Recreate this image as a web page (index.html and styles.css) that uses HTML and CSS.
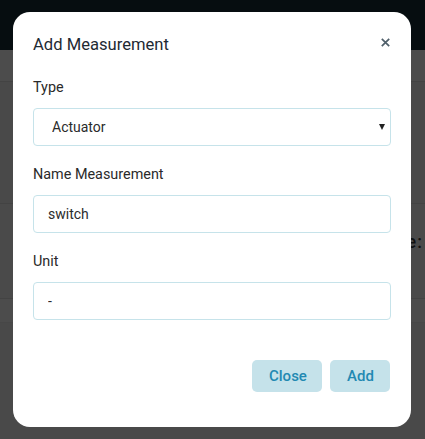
FILE: index.html
```html
<!DOCTYPE html>
<html>
<head>
<meta charset="utf-8">
<link rel="stylesheet" href="styles.css">
</head>
<body>
<div class="page">
  <div class="topbar"></div>
  <div class="row row-a"></div>
  <div class="row row-b"></div>
  <div class="row row-c"><span class="ghost">Type:</span></div>
  <div class="row row-d"></div>
  <div class="row row-e"></div>
</div>
<div class="modal">
  <div class="modal-header">
    <h5 class="modal-title">Add Measurement</h5>
    <button class="close-x" type="button" aria-label="Close">
      <svg width="9" height="9" viewBox="0 0 9 9"><path d="M0.8 0.8 L8.2 8.2 M8.2 0.8 L0.8 8.2" stroke="#4f5f6a" stroke-width="1.7" stroke-linecap="butt"/></svg>
    </button>
  </div>
  <div class="modal-body">
    <div class="group">
      <label class="label">Type</label>
      <div class="select-wrap">
        <select class="control select"><option>Actuator</option></select>
        <span class="caret"></span>
      </div>
    </div>
    <div class="group">
      <label class="label">Name Measurement</label>
      <input class="control input" value="switch">
    </div>
    <div class="group">
      <label class="label">Unit</label>
      <input class="control input" value="-">
    </div>
  </div>
  <div class="modal-footer">
    <button class="btn btn-close" type="button">Close</button>
    <button class="btn btn-add" type="button">Add</button>
  </div>
</div>
</body>
</html>
```
FILE: styles.css
```css
* { box-sizing: border-box; }
html, body { margin: 0; padding: 0; }
body {
  width: 425px;
  height: 439px;
  overflow: hidden;
  background: #4a4a4a;
  font-family: Roboto, "Liberation Sans", sans-serif;
  position: relative;
}
.page { display: flex; flex-direction: column; height: 439px; }
.topbar { height: 50px; background: #060d10; }
.row { border-bottom: 1px solid #434343; }
.row-a { height: 32px; background: #4c4c4c; }
.row-b { height: 122px; background: #494949; }
.row-c { height: 95px; background: #4a4a4a; display: flex; justify-content: flex-end; align-items: flex-start; padding-top: 27px; }
.row-d { height: 24px; background: #4c4c4c; border-bottom-color: #474747; }
.row-e { flex: 1; background: #494949; border-bottom: none; }
.ghost { color: #111; font-size: 18px; font-weight: 500; font-family: Roboto, "Liberation Sans", sans-serif; padding-right: 2px; letter-spacing: 1px; }

.modal {
  position: absolute;
  left: 13px;
  top: 12px;
  width: 398px;
  height: 415px;
  background: #fff;
  border-radius: 17px;
  display: flex;
  flex-direction: column;
}
.modal-header {
  display: flex;
  align-items: center;
  justify-content: space-between;
  padding: 20px 21px 0 20px;
}
.modal-title {
  margin: 0;
  font-size: 16.6px;
  font-weight: 400;
  line-height: 26px;
  color: #1e2a33;
}
.close-x {
  border: 0;
  background: transparent;
  padding: 0;
  margin: 0 0 5px 0;
  width: 9px;
  height: 9px;
  display: flex;
}
.modal-body { padding: 19px 20px 0 20px; display: flex; flex-direction: column; gap: 18px; }
.group { display: flex; flex-direction: column; gap: 9px; }
.label { font-size: 14.4px; line-height: 22px; color: #2a2a2a; }
.control {
  width: 100%;
  height: 38px;
  border: 1px solid #c6e3ea;
  border-radius: 4px;
  background: #fff;
  font-family: Roboto, "Liberation Sans", sans-serif;
  font-size: 14px;
  color: #2b2b2b;
  outline: none;
  margin: 0;
}
.input { padding: 0 14px; }
.select-wrap { position: relative; }
.select { appearance: none; -webkit-appearance: none; padding: 0 18px; }
.caret {
  position: absolute;
  right: 6px;
  top: 16px;
  width: 0; height: 0;
  border-left: 3.5px solid transparent;
  border-right: 3.5px solid transparent;
  border-top: 6px solid #222;
}
.modal-footer {
  display: flex;
  justify-content: flex-end;
  gap: 8px;
  padding: 40px 21px 0 20px;
}
.btn {
  height: 32px;
  border: 0;
  border-radius: 5px;
  background: #c5e2ea;
  color: #2289b2;
  font-family: Roboto, "Liberation Sans", sans-serif;
  font-size: 15px;
  font-weight: 500;
  padding: 0 17px;
}
.btn-close { width: 70px; }
.btn-add { width: 60px; }
```
